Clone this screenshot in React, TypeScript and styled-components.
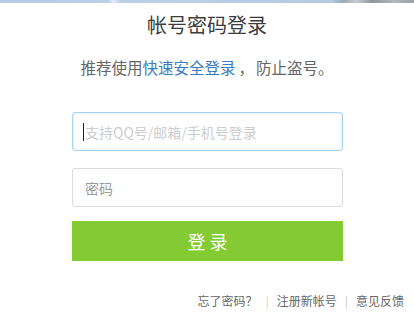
import React from "react"
import styled, { createGlobalStyle } from "styled-components"

const GlobalStyle = createGlobalStyle`
  html, body {
    margin: 0;
    padding: 0;
    background: #fff;
  }
  body {
    font-family: "Noto Sans CJK SC", "Noto Sans", sans-serif;
  }
  * {
    box-sizing: border-box;
  }
`

const Page = styled.div`
  width: 414px;
  height: 316px;
  overflow: hidden;
  background: #fff;
`

// strip of the background picture that peeks over the panel
const TopStrip = styled.div`
  height: 3px;
  background: linear-gradient(
    90deg,
    #b7cce6 0%,
    #b9cee7 26%,
    #e4ecf5 27.5%,
    #bcd0e8 29%,
    #b7cce6 60%,
    #b5c9e2 80%,
    #9ea9b6 83%,
    #c8ccd2 86%,
    #8d959e 90%,
    #b3b8bf 95%,
    #9aa2ab 100%
  );
`

const Title = styled.h1`
  margin: 0;
  height: 44px;
  line-height: 44px;
  text-align: center;
  font-size: 20px;
  font-weight: 400;
  color: #3c3c3c;
`

const Subtitle = styled.p`
  margin: 5px 0 0;
  height: 30px;
  line-height: 30px;
  text-align: center;
  font-size: 15.5px;
  color: #666;
`

const Link = styled.a`
  color: #3a7cc0;
  text-decoration: none;
`

const Comma = styled.span`
  margin: 0 2px 0 3px;
`

const Form = styled.form`
  width: 271px;
  margin: 30px 0 0 72px;
  display: flex;
  flex-direction: column;
`

const Field = styled.div`
  position: relative;
  & + & {
    margin-top: 17px;
  }
`

const Input = styled.input<{ $focused?: boolean; $hint: string }>`
  display: block;
  width: 100%;
  height: 39px;
  padding: 0 12px;
  border-radius: 3px;
  border: 1px solid ${(p) => (p.$focused ? "#a9d3ef" : "#dcdcdc")};
  box-shadow: ${(p) => (p.$focused ? "inset 0 0 3px rgba(120, 190, 235, 0.35)" : "none")};
  background: #fff;
  outline: none;
  font-family: inherit;
  font-size: 14px;
  color: #333;

  &::placeholder {
    color: ${(p) => p.$hint};
  }
`

const Caret = styled.span`
  position: absolute;
  left: 11px;
  top: 11px;
  width: 1px;
  height: 18px;
  background: #222;
`

const Submit = styled.button`
  margin-top: 14px;
  height: 40px;
  border: none;
  border-radius: 0;
  background: #84cb33;
  color: #fff;
  font-family: inherit;
  font-size: 18px;
  letter-spacing: 4px;
  text-indent: 4px;
  cursor: pointer;
`

const Footer = styled.div`
  margin-top: 29px;
  padding-right: 10px;
  display: flex;
  justify-content: flex-end;
  align-items: center;
  height: 20px;
  font-size: 12px;
  color: #666;
`

const FooterLink = styled.a`
  color: #666;
  text-decoration: none;
`

const Sep = styled.span`
  margin: 0 8px;
  color: #ccc;
`

export default function App() {
  return (
    <Page>
      <GlobalStyle />
      <TopStrip />
      <Title>帐号密码登录</Title>
      <Subtitle>
        推荐使用<Link href="#">快速安全登录</Link><Comma>，</Comma>防止盗号。
      </Subtitle>
      <Form onSubmit={(e) => e.preventDefault()}>
        <Field>
          <Input $focused $hint="#cdcdcd" placeholder="支持QQ号/邮箱/手机号登录" />
          <Caret />
        </Field>
        <Field>
          <Input type="password" $hint="#9a9a9a" placeholder="密码" />
        </Field>
        <Submit type="submit">登录</Submit>
      </Form>
      <Footer>
        <FooterLink href="#">忘了密码？</FooterLink>
        <Sep>|</Sep>
        <FooterLink href="#">注册新帐号</FooterLink>
        <Sep>|</Sep>
        <FooterLink href="#">意见反馈</FooterLink>
      </Footer>
    </Page>
  )
}
